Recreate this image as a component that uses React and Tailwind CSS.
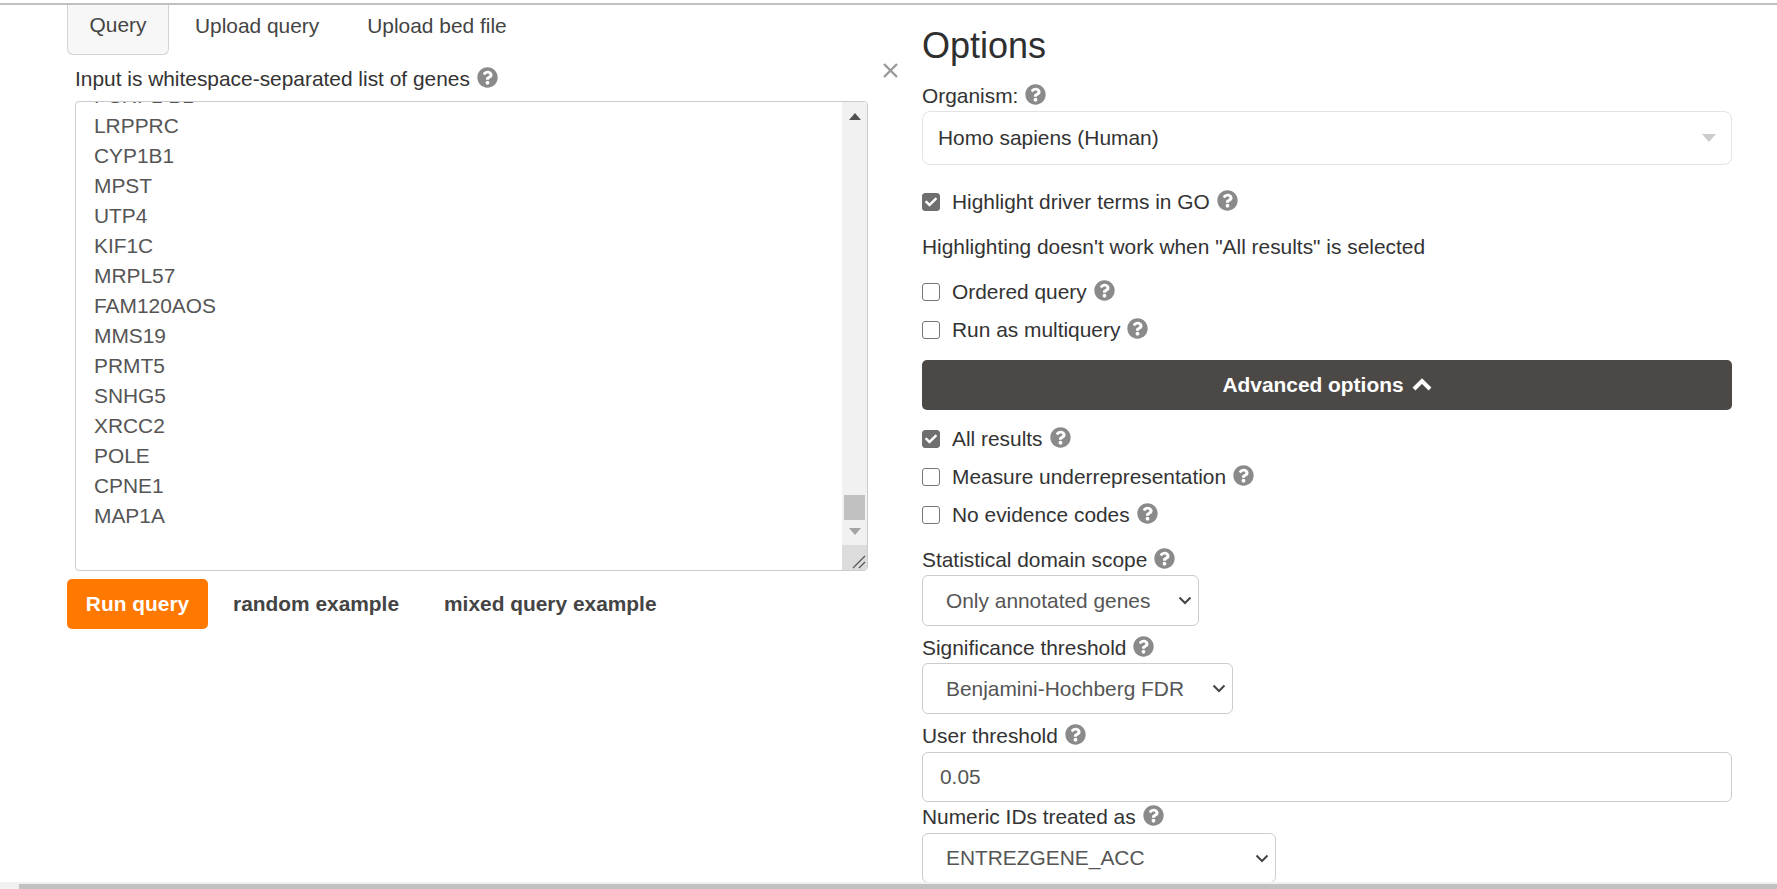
import React from "react";
import { FaQuestionCircle, FaCheck } from "react-icons/fa";

const genes = ["PSRP1 B1", "LRPPRC", "CYP1B1", "MPST", "UTP4", "KIF1C", "MRPL57", "FAM120AOS", "MMS19", "PRMT5", "SNHG5", "XRCC2", "POLE", "CPNE1", "MAP1A"];

function Help() {
  return <FaQuestionCircle className="ml-[7px] mb-[4px] w-[21px] h-[21px] text-[#8a8a8a] shrink-0" />;
}

function Label({ children, className = "" }) {
  return (
    <div className={`flex items-center h-[30px] whitespace-nowrap text-[#333333] ${className}`}>
      <span>{children}</span>
      <Help />
    </div>
  );
}

function Check({ checked, children, className = "" }) {
  return (
    <label className={`flex items-center h-[30px] whitespace-nowrap text-[#333333] ${className}`}>
      <span className={`flex items-center justify-center w-[18px] h-[18px] rounded-[3px] mr-[12px] shrink-0 border ${checked ? "bg-[#6f6f6f] border-[#6f6f6f]" : "bg-white border-[#767676]"}`}>
        {checked && <FaCheck className="w-[12px] h-[12px] text-white" />}
      </span>
      <span>{children}</span>
      <Help />
    </label>
  );
}

function NativeSelect({ value, className = "" }) {
  return (
    <div className={`flex items-center justify-between bg-white border border-[#cccccc] rounded-[6px] pl-[23px] pr-[6px] text-[#555555] whitespace-nowrap ${className}`}>
      <span>{value}</span>
      <svg width="14" height="9" viewBox="0 0 14 9" fill="none" stroke="#444444" strokeWidth="2"><path d="M1.5 1.5 7 7l5.5-5.5" /></svg>
    </div>
  );
}

export default function App() {
  return (
    <div className="w-[1777px] h-[889px] overflow-hidden flex flex-col bg-white text-[20.9px] leading-[30px] font-['Liberation_Sans',Arial,sans-serif]">
      <div className="mt-[3px] h-[2px] bg-[#c0c0c0] shrink-0" />

      <main className="flex-1 min-h-0 overflow-hidden flex pl-[67px]">
        <section className="w-[801px] shrink-0">
          <nav className="flex h-[50px] text-[#444444]">
            <div className="w-[102px] h-[50px] flex items-center justify-center bg-[#f7f7f7] border border-t-0 border-[#d4d4d4] rounded-b-[6px] pb-[9px]">Query</div>
            <div className="pl-[26px] pr-[23px] flex items-center pb-[9px]">Upload query</div>
            <div className="pl-[25px] flex items-center pb-[9px]">Upload bed file</div>
          </nav>

          <Label className="ml-[8px] mt-[9px]">Input is whitespace-separated list of genes</Label>

          <div className="ml-[8px] mt-[7px] h-[470px] flex border border-[#cccccc] rounded-[4px] overflow-hidden">
            <div className="flex-1 overflow-hidden pl-[18px] text-[#555555]">
              <div className="-mt-[21px]">
                {genes.map((g) => <div key={g}>{g}</div>)}
              </div>
            </div>
            <div className="w-[25px] flex flex-col items-center bg-[#f1f1f1] shrink-0">
              <svg className="mt-[11px]" width="12" height="7" viewBox="0 0 12 7"><path d="M6 0 12 7H0z" fill="#505050" /></svg>
              <div className="flex-1" />
              <div className="w-[21px] h-[25px] bg-[#c1c1c1]" />
              <svg className="mt-[8px] mb-[10px]" width="12" height="7" viewBox="0 0 12 7"><path d="M0 0h12L6 7z" fill="#a3a3a3" /></svg>
              <div className="w-full h-[25px] bg-[#dcdcdc] flex items-end justify-end pr-[1px] pb-[1px]">
                <svg width="14" height="14" viewBox="0 0 14 14" stroke="#555555" strokeWidth="1.2"><path d="M1 13 13 1M7 13l6-6" /></svg>
              </div>
            </div>
          </div>

          <div className="mt-[8px] flex items-center font-bold">
            <button className="w-[141px] h-[50px] rounded-[5px] bg-[#ff7800] text-white font-bold">Run query</button>
            <span className="ml-[25px] text-[#444444]">random example</span>
            <span className="ml-[45px] text-[#444444]">mixed query example</span>
          </div>
        </section>

        <div className="w-[54px] shrink-0 pl-[15px] pt-[58px]">
          <svg width="15" height="15" viewBox="0 0 15 15" stroke="#999999" strokeWidth="2.4"><path d="M1 1l13 13M14 1 1 14" /></svg>
        </div>

        <section className="w-[810px] shrink-0 pt-[16px]">
          <h2 className="h-[50px] text-[36px] leading-[50px] text-[#2f2f2f]">Options</h2>

          <Label className="mt-[10px]">Organism:</Label>
          <div className="h-[54px] flex items-center justify-between border border-[#e3e3e3] rounded-[8px] pl-[15px] pr-[15px] text-[#333333]">
            <span>Homo sapiens (Human)</span>
            <svg width="14" height="8" viewBox="0 0 14 8"><path d="M0 0h14L7 8z" fill="#cccccc" /></svg>
          </div>

          <Check checked className="mt-[22px]">Highlight driver terms in GO</Check>
          <p className="mt-[15px] h-[30px] text-[#333333]">Highlighting doesn't work when "All results" is selected</p>
          <Check className="mt-[15px]">Ordered query</Check>
          <Check className="mt-[8px]">Run as multiquery</Check>

          <button className="mt-[15px] w-full h-[50px] flex items-center justify-center rounded-[5px] bg-[#4c4846] text-white font-bold">
            Advanced options
            <svg className="ml-[8px] mb-[3px]" width="20" height="14" viewBox="0 0 20 14" fill="none" stroke="#ffffff" strokeWidth="4"><path d="M2 12l8-8 8 8" /></svg>
          </button>

          <Check checked className="mt-[14px]">All results</Check>
          <Check className="mt-[8px]">Measure underrepresentation</Check>
          <Check className="mt-[8px]">No evidence codes</Check>

          <Label className="mt-[15px]">Statistical domain scope</Label>
          <NativeSelect value="Only annotated genes" className="w-[277px] h-[51px]" />
          <Label className="mt-[7px]">Significance threshold</Label>
          <NativeSelect value="Benjamini-Hochberg FDR" className="w-[311px] h-[51px]" />
          <Label className="mt-[7px]">User threshold</Label>
          <div className="mt-[1px] h-[50px] flex items-center border border-[#cccccc] rounded-[6px] pl-[17px] text-[#555555]">0.05</div>
          <Label>Numeric IDs treated as</Label>
          <NativeSelect value="ENTREZGENE_ACC" className="mt-[1px] w-[354px] h-[50px]" />
        </section>
      </main>

      <div className="h-[7px] shrink-0 bg-[#f1f1f1] pl-[19px] pt-[2px]">
        <div className="w-full h-[5px] bg-[#c1c1c1]" />
      </div>
    </div>
  );
}
